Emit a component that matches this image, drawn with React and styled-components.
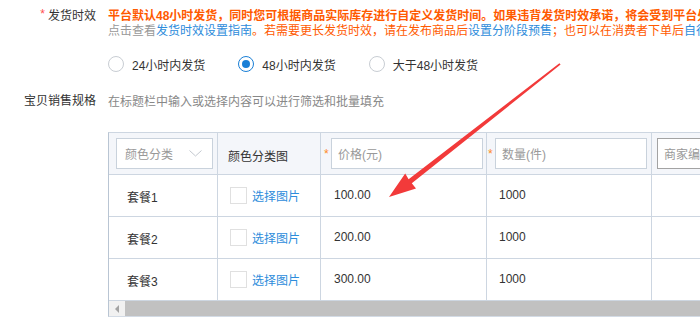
import React from "react";
import styled, { createGlobalStyle } from "styled-components";

const GlobalStyle = createGlobalStyle`
  html, body {
    margin: 0;
    padding: 0;
    background: #fff;
    overflow: hidden;
  }
  body {
    font-family: "Liberation Sans", "Noto Sans CJK SC", sans-serif;
    font-size: 12px;
    color: #333;
  }
`;

const Page = styled.div`
  position: relative;
  width: 700px;
  height: 320px;
  overflow: hidden;
  padding-top: 9px;
  box-sizing: border-box;
`;

const FormRow = styled.div`
  display: grid;
  grid-template-columns: 96px 1fr;
  column-gap: 12px;
  margin-top: ${(p) => p.$top || 0}px;
`;

const Label = styled.div`
  text-align: right;
  line-height: 15px;
  white-space: nowrap;
  color: #333;
`;

const Required = styled.span`
  color: #ff4d4f;
  margin-right: 3px;
  position: relative;
  top: -2px;
`;

const Line = styled.div`
  line-height: 15px;
  white-space: nowrap;
  font-weight: ${(p) => (p.$bold ? 700 : 400)};
  color: ${(p) => p.$color || "#333"};
`;

const Tone = styled.span`
  color: ${(p) => p.$color};
`;

const RadioGroup = styled.div`
  display: flex;
  align-items: center;
  height: 20px;
  gap: 33px;
`;

const RadioOption = styled.label`
  display: flex;
  align-items: center;
  gap: 8px;
  color: #333;
  white-space: nowrap;
`;

const RadioCircle = styled.span`
  width: 16px;
  height: 16px;
  box-sizing: border-box;
  border-radius: 50%;
  border: 1px solid ${(p) => (p.$checked ? "#1a7fd6" : "#c8cdd3")};
  display: flex;
  align-items: center;
  justify-content: center;
  background: #fff;
  &::after {
    content: "";
    display: ${(p) => (p.$checked ? "block" : "none")};
    width: 8px;
    height: 8px;
    border-radius: 50%;
    background: #1a7fd6;
  }
`;

const Hint = styled.div`
  color: #888;
  line-height: 16px;
  white-space: nowrap;
`;

const TableWrap = styled.div`
  margin-top: 22px;
  margin-left: 108px;
  width: 592px;
  overflow: hidden;
  border-left: 1px solid #b9c5d3;
  border-top: 1px solid #cdd6e1;
  border-bottom: 1px solid #d3dbe5;
`;

const Row = styled.div`
  display: grid;
  grid-template-columns: 109px 103px 166px 165px 200px;
  height: 42px;
  background: ${(p) => (p.$head ? "#f4f6fa" : "#fff")};
`;

const Cell = styled.div`
  display: flex;
  align-items: center;
  box-sizing: border-box;
  border-right: 1px solid #cdd6e1;
  border-bottom: 1px solid #cdd6e1;
  padding-left: ${(p) => p.$pl || 0}px;
  padding-top: ${(p) => p.$shift > 0 ? p.$shift * 2 : 0}px;
  padding-bottom: ${(p) => p.$shift < 0 ? -p.$shift * 2 : 0}px;
  white-space: nowrap;
  color: #333;
`;

const SelectBox = styled.div`
  width: 97px;
  height: 31px;
  box-sizing: border-box;
  border: 1px solid #c9d2dc;
  background: #fff;
  display: flex;
  align-items: center;
  justify-content: space-between;
  padding: 0 10px 0 8px;
  color: #999;
`;

const Star = styled.span`
  color: #ff8a1f;
  width: 5px;
  margin-right: 2px;
  font-size: 12px;
  line-height: 12px;
`;

const InputBox = styled.div`
  width: ${(p) => p.$w || 152}px;
  height: 31px;
  box-sizing: border-box;
  border: 1px solid ${(p) => (p.$dark ? "#a3a3a3" : "#c9d2dc")};
  background: #fff;
  display: flex;
  align-items: center;
  padding-left: 6px;
  color: #999;
  white-space: nowrap;
  overflow: hidden;
`;

const PicBox = styled.span`
  width: 17px;
  height: 17px;
  box-sizing: border-box;
  border: 1px solid #e0e0e0;
  margin-right: 5px;
  background: #fff;
`;

const Link = styled.span`
  color: #2d8cdb;
`;

const ScrollBar = styled.div`
  display: flex;
  height: 15px;
  background: #f1f1f1;
`;

const ScrollArrow = styled.div`
  width: 15px;
  display: flex;
  align-items: center;
  justify-content: center;
  flex: none;
  &::before {
    content: "";
    border-top: 4px solid transparent;
    border-bottom: 4px solid transparent;
    border-right: 4px solid #a3a3a3;
  }
`;

const ScrollThumb = styled.div`
  flex: 1;
  margin-left: 1px;
  background: #c1c1c1;
`;

const ArrowOverlay = styled.svg`
  position: absolute;
  left: 0;
  top: 0;
  pointer-events: none;
`;

const Chevron = () => (
  <svg width="13" height="7" viewBox="0 0 13 7">
    <path d="M0.5 0.5 L6.5 6 L12.5 0.5" fill="none" stroke="#c3c8cf" strokeWidth="1" />
  </svg>
);

const rows = [
  { name: "套餐1", price: "100.00", qty: "1000" },
  { name: "套餐2", price: "200.00", qty: "1000" },
  { name: "套餐3", price: "300.00", qty: "1000" },
];

const ORANGE = "#ff5a00";
const BLUE = "#2d8cdb";

export default function App() {
  return (
    <Page>
      <GlobalStyle />
      <FormRow>
        <Label>
          <Required>*</Required>发货时效
        </Label>
        <div>
          <Line $bold $color={ORANGE}>
            平台默认48小时发货，同时您可根据商品实际库存进行自定义发货时间。如果违背发货时效承诺，将会受到平台处罚
          </Line>
          <Line>
            <Tone $color="#999">点击查看</Tone>
            <Tone $color={BLUE}>发货时效设置指南</Tone>
            <Tone $color={ORANGE}>。若需要更长发货时效，请在发布商品后</Tone>
            <Tone $color={BLUE}>设置分阶段预售</Tone>
            <Tone $color={ORANGE}>；也可以在消费者下单后</Tone>
            <Tone $color={BLUE}>自行设置</Tone>
          </Line>
        </div>
      </FormRow>

      <FormRow $top={15}>
        <div />
        <RadioGroup>
          <RadioOption>
            <RadioCircle />
            24小时内发货
          </RadioOption>
          <RadioOption>
            <RadioCircle $checked />
            48小时内发货
          </RadioOption>
          <RadioOption>
            <RadioCircle />
            大于48小时发货
          </RadioOption>
        </RadioGroup>
      </FormRow>

      <FormRow $top={20}>
        <Label>宝贝销售规格</Label>
        <Hint>在标题栏中输入或选择内容可以进行筛选和批量填充</Hint>
      </FormRow>

      <TableWrap>
        <Row $head>
          <Cell $pl={7}>
            <SelectBox>
              颜色分类
              <Chevron />
            </SelectBox>
          </Cell>
          <Cell $pl={10} $shift={2}>颜色分类图</Cell>
          <Cell $pl={3}>
            <Star>*</Star>
            <InputBox>价格(元)</InputBox>
          </Cell>
          <Cell $pl={1}>
            <Star>*</Star>
            <InputBox>数量(件)</InputBox>
          </Cell>
          <Cell $pl={5}>
            <InputBox $dark $w={180}>商家编码</InputBox>
          </Cell>
        </Row>
        {rows.map((r) => (
          <Row key={r.name}>
            <Cell $pl={18} $shift={1}>{r.name}</Cell>
            <Cell $pl={12}>
              <PicBox />
              <Link>选择图片</Link>
            </Cell>
            <Cell $pl={13} $shift={-1}>{r.price}</Cell>
            <Cell $pl={12} $shift={-1}>{r.qty}</Cell>
            <Cell />
          </Row>
        ))}
        <ScrollBar>
          <ScrollArrow />
          <ScrollThumb />
        </ScrollBar>
      </TableWrap>

      <ArrowOverlay width="700" height="320" viewBox="0 0 700 320">
        <polygon
          points="389,197 416,188.5 411.8,183.2 560.6,64.6 559.4,63.2 408.6,179.2 405.2,173.6"
          fill="#f23a3a"
        />
      </ArrowOverlay>
    </Page>
  );
}
